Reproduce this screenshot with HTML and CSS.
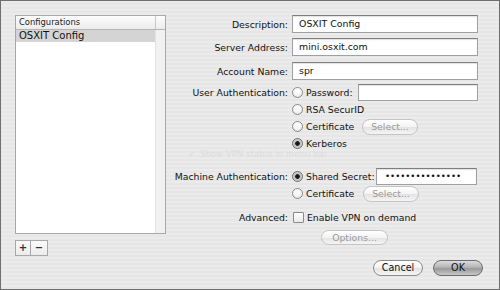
FILE: index.html
```html
<!DOCTYPE html>
<html>
<head>
<meta charset="utf-8">
<link rel="stylesheet" href="styles.css">
</head>
<body>
<div class="window">
  <div class="ghost"><span class="ghost-check">✓</span> Show VPN status in menu bar</div>
  <div class="sidebar">
    <div class="list">
      <div class="list-head"><span class="head-title">Configurations</span><span class="head-end"></span></div>
      <div class="list-body">
        <div class="list-items">
          <div class="item selected">OSXIT Config</div>
        </div>
        <div class="scroll"></div>
      </div>
    </div>
    <div class="pm">
      <div class="pm-btn">+</div>
      <div class="pm-btn">−</div>
    </div>
  </div>
  <div class="form">
    <div class="row r-field">
      <div class="label">Description:</div>
      <div class="field wide">OSXIT Config</div>
    </div>
    <div class="row r-field mt5">
      <div class="label">Server Address:</div>
      <div class="field wide">mini.osxit.com</div>
    </div>
    <div class="row r-field mt6">
      <div class="label">Account Name:</div>
      <div class="field wide">spr</div>
    </div>
    <div class="row r-opt mt4">
      <div class="label">User Authentication:</div>
      <div class="opt w-pass"><span class="radio"></span>Password:</div>
      <div class="field pass"></div>
    </div>
    <div class="row r-opt">
      <div class="label"></div>
      <div class="opt"><span class="radio"></span>RSA SecurID</div>
    </div>
    <div class="row r-opt">
      <div class="label"></div>
      <div class="opt w-cert"><span class="radio"></span>Certificate</div>
      <div class="btn disabled sel">Select...</div>
    </div>
    <div class="row r-opt">
      <div class="label"></div>
      <div class="opt"><span class="radio on"></span>Kerberos</div>
    </div>
    <div class="row r-opt mt16">
      <div class="label">Machine Authentication:</div>
      <div class="opt w-secret"><span class="radio on"></span>Shared Secret:</div>
      <div class="field secret">•••••••••••••••</div>
    </div>
    <div class="row r-opt">
      <div class="label"></div>
      <div class="opt w-cert2"><span class="radio"></span>Certificate</div>
      <div class="btn disabled sel">Select...</div>
    </div>
    <div class="row r-opt mt7">
      <div class="label">Advanced:</div>
      <div class="opt"><span class="check"></span>Enable VPN on demand</div>
    </div>
    <div class="row r-btn mt3">
      <div class="label"></div>
      <div class="btn disabled options">Options...</div>
    </div>
    <div class="actions">
      <div class="btn action">Cancel</div>
      <div class="btn action default">OK</div>
    </div>
  </div>
</div>
</body>
</html>
```

FILE: styles.css
```css
html, body {
  margin: 0;
  padding: 0;
}
body {
  font-family: "DejaVu Sans", "Liberation Sans", sans-serif;
  font-size: 9.3px;
  color: #111;
}
.window {
  position: relative;
  width: 500px;
  height: 290px;
  box-sizing: border-box;
  border: 1px solid #6f6f6f;
  padding: 14px 16px 0 14px;
  display: flex;
  background-color: #e9e9e9;
  background-image: repeating-linear-gradient(to bottom, #ebebeb 0px, #ebebeb 2px, #e6e6e6 2px, #e6e6e6 4px);
}
.ghost {
  position: absolute;
  left: 187px;
  top: 149px;
  line-height: 9px;
  color: #dcdcdc;
  font-size: 8.6px;
  z-index: 0;
}
.ghost-check {
  margin-right: 2px;
}
.sidebar {
  width: 151px;
  display: flex;
  flex-direction: column;
  position: relative;
  z-index: 1;
}
.list {
  height: 219px;
  box-sizing: border-box;
  border: 1px solid #a9a9a9;
  background: #fff;
  display: flex;
  flex-direction: column;
}
.list-head {
  height: 13px;
  display: flex;
  border-bottom: 1px solid #b4b4b4;
  background: linear-gradient(to bottom, #fdfdfd, #ececec);
  font-size: 8.4px;
  color: #222;
}
.head-title {
  flex: 1;
  padding-left: 3px;
  line-height: 13px;
  border-right: 1px solid #c8c8c8;
}
.head-end {
  width: 9px;
}
.list-body {
  flex: 1;
  display: flex;
}
.list-items {
  flex: 1;
}
.item {
  height: 12px;
  line-height: 12px;
  padding-left: 3px;
  font-size: 10px;
  color: #111;
}
.item.selected {
  background: #d4d4d4;
}
.scroll {
  width: 9px;
  background: #f1f1f1;
  border-left: 1px solid #e2e2e2;
}
.pm {
  display: flex;
  margin-top: 6px;
}
.pm-btn {
  width: 16px;
  height: 16px;
  box-sizing: border-box;
  border: 1px solid #a8a8a8;
  background: linear-gradient(to bottom, #fafafa, #ececec);
  text-align: center;
  line-height: 13px;
  font-size: 10px;
  font-weight: bold;
  color: #333;
}
.pm-btn + .pm-btn {
  border-left: none;
  width: 17px;
}
.form {
  flex: 1;
  display: flex;
  flex-direction: column;
  position: relative;
  z-index: 1;
}
.row {
  display: flex;
  align-items: center;
}
.r-field {
  height: 18px;
}
.r-opt {
  height: 17px;
}
.r-btn {
  height: 16px;
}
.mt3 { margin-top: 3px; }
.mt4 { margin-top: 4px; }
.mt5 { margin-top: 5px; }
.mt6 { margin-top: 6px; }
.mt7 { margin-top: 7px; }
.mt16 { margin-top: 16px; }
.label {
  width: 122px;
  flex: none;
  text-align: right;
  margin-right: 4px;
  white-space: nowrap;
}
.field {
  box-sizing: border-box;
  height: 18px;
  border: 1px solid #a0a0a0;
  border-top-color: #7e7e7e;
  background: #fff;
  box-shadow: inset 0 1px 1px rgba(0, 0, 0, 0.12);
  padding-left: 6px;
  line-height: 16px;
  font-size: 9.4px;
  white-space: nowrap;
}
.field.wide {
  width: 186px;
}
.field.pass {
  width: 120px;
  height: 17px;
}
.field.secret {
  width: 101px;
  height: 17px;
  padding-left: 8px;
  font-size: 8.6px;
  letter-spacing: 0;
  line-height: 15px;
}
.opt {
  display: flex;
  align-items: center;
  white-space: nowrap;
}
.w-pass { width: 66px; }
.w-cert { width: 70px; }
.w-secret { width: 84px; }
.w-cert2 { width: 71px; }
.radio {
  width: 11px;
  height: 11px;
  box-sizing: border-box;
  border-radius: 50%;
  border: 1px solid #8a8a8a;
  background: radial-gradient(circle at 50% 30%, #ffffff 0%, #f4f4f4 55%, #d6d6d6 100%);
  margin-right: 3px;
  flex: none;
  position: relative;
}
.radio.on {
  background: radial-gradient(circle at 50% 50%, #111 0px, #222 2px, #bdbdbd 2.6px, #e6e6e6 100%);
  border-color: #6b6b6b;
}
.check {
  width: 11px;
  height: 11px;
  box-sizing: border-box;
  border: 1px solid #8a8a8a;
  border-radius: 1px;
  background: linear-gradient(to bottom, #ffffff, #e9e9e9);
  margin-right: 3px;
  margin-left: 1px;
}
.btn {
  box-sizing: border-box;
  border: 1px solid #a3a3a3;
  border-radius: 8px;
  background: linear-gradient(to bottom, #ffffff 0%, #f3f3f3 50%, #e3e3e3 51%, #f5f5f5 100%);
  text-align: center;
  white-space: nowrap;
}
.btn.disabled {
  color: #9a9a9a;
  border-color: #c4c4c4;
}
.sel {
  width: 56px;
  height: 16px;
  line-height: 14px;
}
.options {
  width: 67px;
  height: 15px;
  line-height: 13px;
  margin-left: 29px;
}
.actions {
  display: flex;
  justify-content: flex-end;
  gap: 10px;
  margin-top: 15px;
}
.action {
  width: 50px;
  height: 16px;
  line-height: 14px;
  font-size: 9.6px;
  border-color: #8c8c8c;
}
.action.default {
  background: linear-gradient(to bottom, #dcdcdc 0%, #b4b4b4 45%, #9a9a9a 55%, #c8c8c8 100%);
  border-color: #6c6c6c;
}
```
